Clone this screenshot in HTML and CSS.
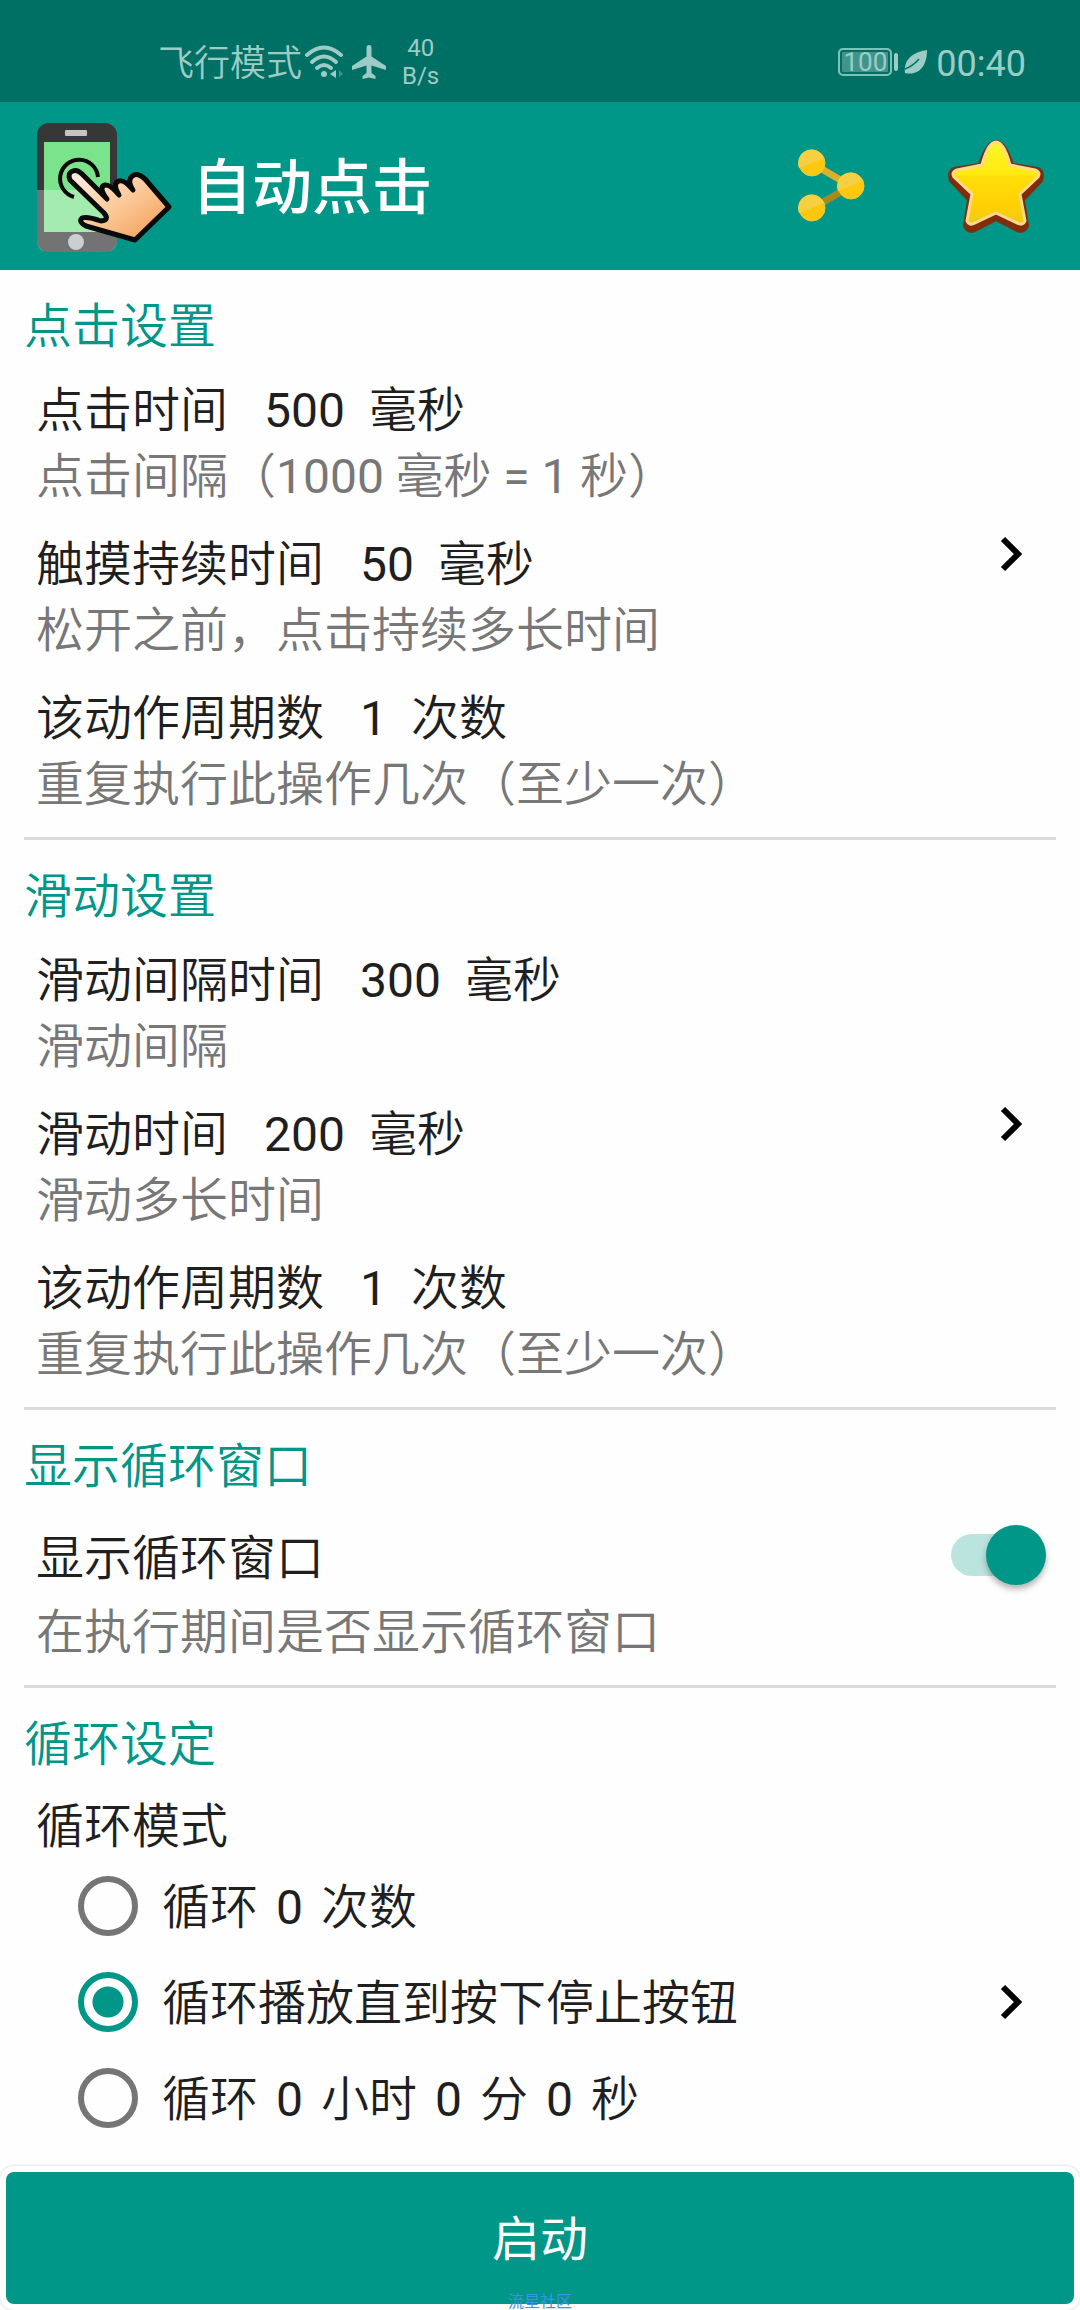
FILE: index.html
```html
<!DOCTYPE html>
<html lang="zh-CN">
<head>
<meta charset="utf-8">
<meta name="viewport" content="width=device-width, initial-scale=1">
<title>自动点击</title>
<link rel="stylesheet" href="styles.css">
</head>
<body>
<div class="status">
  <div class="status-left">
    <span class="carrier">飞行模式</span>
    <svg class="wifi" viewBox="0 0 40 34" aria-hidden="true">
      <g fill="none" stroke="currentColor" stroke-width="4" stroke-linecap="round"><path d="M3 10Q20-5 37 10"/><path d="M8 17Q20 6 32 17"/><path d="M13 23Q20 17 27 23"/></g>
      <circle cx="20" cy="29" r="3" fill="currentColor"/><path d="M26 29l6-4v8z" fill="currentColor"/><path d="M35 25l4 4-4 3z" fill="currentColor" opacity=".4"/>
    </svg>
    <svg class="plane" viewBox="0 0 34 34" aria-hidden="true"><path fill="currentColor" d="M17 0q2.500 0 2.500 3v8.500L34 21v4l-14.500-4.500V28l4 3v3L17 32.500 10.500 34v-3l4-3v-7.500L0 25v-4l14.500-9.500V3Q14.500 0 17 0z"/></svg>
    <span class="speed">40<br>B/s</span>
  </div>
  <div class="status-right">
    <span class="battery">100</span>
    <svg class="leaf" viewBox="0 0 24 26" aria-hidden="true"><path fill="currentColor" d="M23 1C11 3-1 9 1 24c14 3 22-7 22-23z"/><path d="M1 20Q9 17 15 10" fill="none" stroke="#007065" stroke-width="1.500"/></svg>
    <span class="clock">00:40</span>
  </div>
</div>
<header class="appbar">
  <svg class="logo" viewBox="0 0 140 136" aria-hidden="true">
    <defs>
      <linearGradient id="skin" x1="0" y1="0" x2="1" y2="1"><stop offset=".1" stop-color="#ffe9dc"/><stop offset=".5" stop-color="#fcc998"/><stop offset="1" stop-color="#f0974c"/></linearGradient>
    </defs>
    <rect x="1" y="5" width="80" height="129" rx="12" fill="#373737"/>
    <rect x="8" y="24" width="66" height="90" fill="#7be38c"/>
    <path d="M1 72h80v50q0 12-12 12H13q-12 0-12-12z" fill="#fff" opacity=".3"/>
    <rect x="29" y="12" width="22" height="6" rx="1" fill="#c4c4c4"/>
    <circle cx="40" cy="124" r="8" fill="#c9cfd2"/>
    <path d="M38 79A19 19 0 1 1 62 59" fill="none" stroke="#0a0a0a" stroke-width="4"/>
    <path d="M34 62Q31 55 37 53Q41 51 46 56L71 81Q62 69 69 67Q74 66 83 77Q76 65 83 63Q88 61 97 72Q90 61 98 57Q102 55 109 61L133 89L99 122L50 108Q42 104 46 100Q51 98 65 103Q74 102 68 95Z" fill="url(#skin)" stroke="#0a0a0a" stroke-width="5" stroke-linejoin="round"/>
  </svg>
  <h1>自动点击</h1>
  <button class="icon-btn" aria-label="分享">
    <svg class="share" viewBox="0 0 68 74" aria-hidden="true">
      <path d="M15 15l38 22" stroke="#d9b02a" stroke-width="7"/><path d="M53 37L15 59" stroke="#a68b18" stroke-width="7"/>
      <g fill="#ffc80e" stroke="#dfcc45" stroke-width="1"><circle cx="14" cy="14" r="13"/><circle cx="53" cy="37" r="13"/><circle cx="14" cy="59" r="13"/></g>
      <g fill="#f7cf42"><path d="M1 19A13 13 0 0 1 26 9z"/><path d="M40 42A13 13 0 0 1 65 32z"/><path d="M1 64A13 13 0 0 1 26 54z"/></g>
    </svg>
  </button>
  <button class="icon-btn" aria-label="收藏">
    <svg class="star" viewBox="0 0 96 94" aria-hidden="true">
      <defs><linearGradient id="gold" x1="0" y1="0" x2="0" y2="1"><stop offset="0" stop-color="#fff52a"/><stop offset=".4" stop-color="#ffea0e"/><stop offset=".42" stop-color="#ffde08"/><stop offset=".8" stop-color="#ffcf05"/><stop offset="1" stop-color="#eccb1b"/></linearGradient></defs>
      <path d="M48 2Q57 2 65 25L90 29Q97 32 94 42L76 61L80 87Q77 95 69 92L48 81L27 92Q19 95 16 87L20 61L2 42Q-1 32 6 29L31 25Q39 2 48 2Z" fill="#832b0b" stroke="#75340f" stroke-width="2"/>
      <path d="M48 3Q56 3 62 26L87 31Q93 33 90 38L72 55L77 82Q75 87 69 84L48 74L27 84Q21 87 19 82L24 55L6 38Q3 33 9 31L34 26Q40 3 48 3Z" fill="url(#gold)" stroke="#ffd992" stroke-width="3" stroke-linejoin="round"/>
    </svg>
  </button>
</header>
<main>
  <section class="group">
    <div class="body">
      <h2>点击设置</h2>
      <dl>
        <div><dt>点击时间<b>500</b>毫秒</dt><dd>点击间隔（<span class="num">1000</span> 毫秒 <span class="num">=</span> <span class="num">1</span> 秒）</dd></div>
        <div><dt>触摸持续时间<b>50</b>毫秒</dt><dd>松开之前，点击持续多长时间</dd></div>
        <div><dt>该动作周期数<b>1</b>次数</dt><dd>重复执行此操作几次（至少一次）</dd></div>
      </dl>
    </div>
    <button class="more" aria-label="编辑点击设置"><svg viewBox="0 0 24 36" aria-hidden="true"><path d="M3 3l15 15L3 33"/></svg></button>
  </section>
  <section class="group">
    <div class="body">
      <h2>滑动设置</h2>
      <dl>
        <div><dt>滑动间隔时间<b>300</b>毫秒</dt><dd>滑动间隔</dd></div>
        <div><dt>滑动时间<b>200</b>毫秒</dt><dd>滑动多长时间</dd></div>
        <div><dt>该动作周期数<b>1</b>次数</dt><dd>重复执行此操作几次（至少一次）</dd></div>
      </dl>
    </div>
    <button class="more" aria-label="编辑滑动设置"><svg viewBox="0 0 24 36" aria-hidden="true"><path d="M3 3l15 15L3 33"/></svg></button>
  </section>
  <section class="group">
    <div class="body">
      <h2>显示循环窗口</h2>
      <div class="switch-row"><label for="loop">显示循环窗口</label><input class="switch" type="checkbox" role="switch" id="loop" checked></div>
      <p class="hint">在执行期间是否显示循环窗口</p>
    </div>
  </section>
  <section class="group">
    <div class="body">
      <h2>循环设定</h2>
      <h3 id="mode">循环模式</h3>
      <div class="choices">
        <div role="radiogroup" aria-labelledby="mode">
          <label class="choice"><input type="radio" name="mode"><span>循环</span><span class="num">0</span><span>次数</span></label>
          <label class="choice"><input type="radio" name="mode" checked><span>循环播放直到按下停止按钮</span></label>
          <label class="choice"><input type="radio" name="mode"><span>循环</span><span class="num">0</span><span>小时</span><span class="num">0</span><span>分</span><span class="num">0</span><span>秒</span></label>
        </div>
        <button class="more" aria-label="编辑循环设定"><svg viewBox="0 0 24 36" aria-hidden="true"><path d="M3 3l15 15L3 33"/></svg></button>
      </div>
    </div>
  </section>
</main>
<footer>
  <button class="start">启动</button>
  <span class="mark">流星社区</span>
</footer>
</body>
</html>
```
FILE: styles.css
```css
* { box-sizing: border-box; margin: 0; padding: 0; }
body {
  min-height: 100vh;
  display: flex;
  flex-direction: column;
  background: #fefefe;
  color: #1f1f1f;
  font: 350 48px/66px Roboto, "Noto Sans CJK SC", sans-serif;
  overflow-x: hidden;
}
button { border: 0; background: none; font: inherit; color: inherit; }
svg { display: block; }
.num { font-weight: 400; }

.status {
  height: 102px;
  padding: 22px 54px 0 158px;
  display: flex;
  justify-content: space-between;
  background: #007065;
  color: #9dccc6;
  line-height: 80px;
}
.status-left, .status-right { display: flex; align-items: center; height: 80px; }
.carrier, .clock { padding-top: 4px; }
.carrier { font-size: 36px; }
.wifi { width: 40px; height: 34px; margin-left: 2px; }
.plane { width: 34px; height: 34px; margin-left: 8px; }
.speed { margin-left: 16px; font-size: 24px; font-weight: 400; line-height: 28px; text-align: center; }
.battery {
  position: relative;
  width: 54px;
  height: 28px;
  border: 2px solid #7fc0b8;
  border-radius: 5px;
  background: #3f958c;
  box-shadow: inset 0 0 0 2px #007065;
  font-size: 26px;
  font-weight: 400;
  line-height: 24px;
  text-align: center;
}
.battery::after {
  content: "";
  position: absolute;
  right: -8px;
  top: 3px;
  width: 4px;
  height: 18px;
  border-radius: 2px;
  background: #9dccc6;
}
.leaf { width: 24px; height: 26px; margin-left: 12px; }
.clock { margin-left: 8px; font-size: 36px; font-weight: 400; }

.appbar {
  height: 168px;
  padding: 0 36px;
  display: flex;
  align-items: center;
  background: #009688;
  color: #fff;
}
.logo { width: 140px; height: 136px; }
h1 { flex: 1; margin-left: 16px; padding-top: 6px; font-size: 60px; line-height: 80px; font-weight: 500; }
.icon-btn + .icon-btn { margin-left: 82px; }
.share { width: 68px; height: 74px; }
.star { width: 96px; height: 94px; }

.group {
  margin: 0 24px;
  display: flex;
  align-items: center;
  border-bottom: 3px solid #dcdcdc;
}
.group:last-child { border: 0; }
.body { flex: 1; padding: 29px 0 19px; }
h2 { margin-bottom: 23px; font-size: 48px; line-height: 56px; font-weight: 350; color: #009688; }
h3 { padding-left: 12px; font-size: 48px; line-height: 62px; font-weight: 350; }
dl { display: grid; gap: 22px; padding-left: 12px; }
dt b { margin: 0 24px 0 36px; font-weight: 400; }
dd, .hint { color: #777; }
.more { width: 54px; height: 96px; margin-right: 17px; display: flex; align-items: center; justify-content: center; }
.more svg { width: 24px; height: 36px; fill: none; stroke: #000; stroke-width: 6; }

.switch-row { display: flex; align-items: center; justify-content: space-between; padding: 0 10px 0 12px; line-height: 82px; }
.switch { appearance: none; position: relative; width: 95px; height: 42px; margin-bottom: 8px; border-radius: 21px; background: #bce4df; }
.switch::after {
  content: "";
  position: absolute;
  right: 0;
  top: -9px;
  width: 60px;
  height: 60px;
  border-radius: 50%;
  background: #009688;
  box-shadow: 0 4px 6px rgba(0, 0, 0, .3);
}
.hint { padding-left: 12px; }

.choices { display: flex; align-items: center; justify-content: space-between; padding-left: 54px; }
.group:last-child .body { padding-bottom: 0; }
.choice { display: flex; align-items: center; gap: 18px; height: 96px; }
.choice span { padding-top: 4px; }
.choice input { appearance: none; width: 60px; height: 60px; margin-right: 6px; border: 6px solid #757575; border-radius: 50%; }
.choice input:checked { border-color: #009688; background: radial-gradient(circle, #009688 15px, transparent 16px); }

footer {
  position: relative;
  margin-top: auto;
  padding: 6px;
  border-radius: 14px;
  box-shadow: 0 0 3px rgba(0, 0, 0, .2);
}
.start {
  display: block;
  width: 100%;
  height: 132px;
  padding-top: 4px;
  border-radius: 8px;
  background: #009688;
  color: #fff;
  font-weight: 400;
}
.mark {
  position: absolute;
  left: 0;
  right: 0;
  bottom: 0;
  font-size: 16px;
  line-height: 16px;
  font-weight: 400;
  text-align: center;
  color: #3b93e6;
}
```
